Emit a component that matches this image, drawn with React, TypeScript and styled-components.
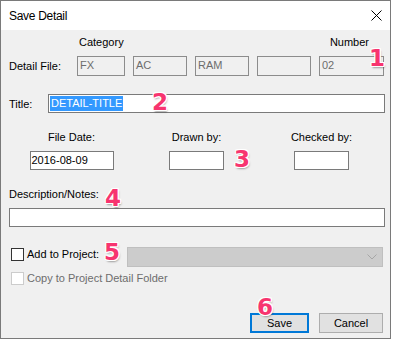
import React from 'react';
import styled, { createGlobalStyle } from 'styled-components';

const GlobalStyle = createGlobalStyle`
  html, body {
    margin: 0;
    padding: 0;
    background: #ffffff;
  }
  body {
    font-family: "Liberation Sans", Arial, sans-serif;
    font-size: 11px;
    color: #000;
  }
`;

const Window = styled.div`
  position: relative;
  box-sizing: border-box;
  width: 391px;
  height: 339px;
  border: 1px solid #7a7a7a;
  background: #f0f0f0;
  display: flex;
  flex-direction: column;
`;

const TitleBar = styled.div`
  height: 29px;
  background: #ffffff;
  display: flex;
  align-items: center;
  justify-content: space-between;
  padding: 0 8px;
`;

const TitleText = styled.div`
  font-size: 12px;
  letter-spacing: -0.3px;
`;

const Body = styled.div`
  display: flex;
  flex-direction: column;
  padding: 0 5px 0 8px;
`;

const Row = styled.div<{ top: number }>`
  display: flex;
  align-items: center;
  margin-top: ${({ top }) => top}px;
`;

const Label = styled.div<{ width?: number }>`
  line-height: 14px;
  white-space: nowrap;
  ${({ width }) => width ? `width: ${width}px; flex-shrink: 0;` : ''}
`;

const HeaderRow = styled.div`
  display: flex;
  line-height: 14px;
  margin-top: 5px;
  padding-left: 70px;
  padding-right: 16px;
  justify-content: space-between;
`;

const Boxes = styled.div`
  display: flex;
  gap: 8px;
`;

const DisabledBox = styled.div<{ w: number }>`
  box-sizing: border-box;
  width: ${({ w }) => w}px;
  height: 20px;
  border: 1px solid #8c8c8c;
  color: #6d6d6d;
  padding: 2px 2px 0;
  line-height: 13px;
`;

const TextBox = styled.div<{ w?: number }>`
  box-sizing: border-box;
  ${({ w }) => w ? `width: ${w}px;` : 'flex: 1 1 auto; min-width: 0;'}
  height: 19px;
  border: 1px solid #7a7a7a;
  background: #ffffff;
  padding: 1px 1px 0;
  line-height: 15px;
`;

const Selection = styled.span`
  background: #3399ff;
  color: #ffffff;
  display: inline-block;
  padding: 0 1px;
`;

const DateGrid = styled.div`
  display: grid;
  grid-template-columns: repeat(3, 125px);
  margin-top: 17px;
`;

const DateCol = styled.div`
  display: flex;
  flex-direction: column;
  align-items: center;
  gap: 7px;
`;

const Stack = styled.div<{ top: number }>`
  display: flex;
  flex-direction: column;
  gap: 7px;
  margin-top: ${({ top }) => top}px;
`;

const CheckRow = styled.div<{ top: number }>`
  display: flex;
  align-items: flex-start;
  margin-top: ${({ top }) => top}px;
`;

const CheckBox = styled.div<{ disabled?: boolean }>`
  box-sizing: border-box;
  width: 13px;
  height: 13px;
  margin: 1px 3px 0 2px;
  border: 1px solid ${({ disabled }) => disabled ? '#cccccc' : '#333333'};
  background: #ffffff;
  flex-shrink: 0;
`;

const CheckLabel = styled.div<{ disabled?: boolean }>`
  line-height: 14px;
  color: ${({ disabled }) => disabled ? '#6d6d6d' : '#000'};
  white-space: nowrap;
`;

const Combo = styled.div`
  box-sizing: border-box;
  height: 20px;
  margin-left: 28px;
  margin-right: 2px;
  flex: 1;
  background: #cccccc;
  border: 1px solid #bfbfbf;
  display: flex;
  align-items: center;
  justify-content: flex-end;
  padding-right: 5px;
`;

const ButtonRow = styled.div`
  display: flex;
  justify-content: flex-end;
  gap: 10px;
  margin-top: 28px;
  margin-right: 2px;
`;

const Button = styled.div<{ primary?: boolean; w: number }>`
  box-sizing: border-box;
  width: ${({ w }) => w}px;
  height: 20px;
  background: #e1e1e1;
  border: ${({ primary }) => primary ? '2px solid #0078d7' : '1px solid #adadad'};
  display: flex;
  align-items: center;
  justify-content: center;
  font-size: 11px;
`;

const Marker = styled.div<{ x: number; y: number }>`
  position: absolute;
  left: ${({ x }) => x}px;
  top: ${({ y }) => y}px;
  font-family: "DejaVu Sans", "Liberation Sans", sans-serif;
  font-weight: bold;
  font-size: 23px;
  line-height: 1;
  color: #f7346f;
  text-shadow:
    -1px -1px 0 #fff, 1px -1px 0 #fff, -1px 1px 0 #fff, 1px 1px 0 #fff,
    0 -1px 0 #fff, 0 1px 0 #fff, -1px 0 0 #fff, 1px 0 0 #fff,
    1px 2px 2px rgba(0, 0, 0, 0.35);
`;

const CloseIcon = () => (
    <svg width="11" height="11" viewBox="0 0 11 11">
        <path d="M0.5 0.5 L10.5 10.5 M10.5 0.5 L0.5 10.5" stroke="#000" strokeWidth="1" fill="none"/>
    </svg>
);

const Chevron = () => (
    <svg width="10" height="6" viewBox="0 0 10 6">
        <path d="M0.5 0.5 L5 5 L9.5 0.5" stroke="#a6a6a6" strokeWidth="1" fill="none"/>
    </svg>
);

const markers = [
    { n: 1, x: 368, y: 46 },
    { n: 2, x: 151, y: 90 },
    { n: 3, x: 233, y: 147 },
    { n: 4, x: 104, y: 186 },
    { n: 5, x: 103, y: 240 },
    { n: 6, x: 256, y: 295 },
];

const App = () => {
    return (
        <>
            <GlobalStyle/>
            <Window>
                <TitleBar>
                    <TitleText>Save Detail</TitleText>
                    <CloseIcon/>
                </TitleBar>
                <Body>
                    <HeaderRow>
                        <span>Category</span>
                        <span>Number</span>
                    </HeaderRow>
                    <Row top={7}>
                        <Label width={68}>Detail File:</Label>
                        <Boxes>
                            <DisabledBox w={48}>FX</DisabledBox>
                            <DisabledBox w={54}>AC</DisabledBox>
                            <DisabledBox w={54}>RAM</DisabledBox>
                            <DisabledBox w={54}/>
                            <DisabledBox w={65}>02</DisabledBox>
                        </Boxes>
                    </Row>
                    <Row top={18}>
                        <Label width={39}>Title:</Label>
                        <TextBox>
                            <Selection>DETAIL-TITLE</Selection>
                        </TextBox>
                    </Row>
                    <DateGrid>
                        <DateCol>
                            <Label>File Date:</Label>
                            <TextBox w={84}>2016-08-09</TextBox>
                        </DateCol>
                        <DateCol>
                            <Label>Drawn by:</Label>
                            <TextBox w={55}/>
                        </DateCol>
                        <DateCol>
                            <Label>Checked by:</Label>
                            <TextBox w={55}/>
                        </DateCol>
                    </DateGrid>
                    <Stack top={17}>
                        <Label>Description/Notes:</Label>
                        <TextBox/>
                    </Stack>
                    <CheckRow top={20}>
                        <CheckBox/>
                        <CheckLabel>Add to Project:</CheckLabel>
                        <Combo>
                            <Chevron/>
                        </Combo>
                    </CheckRow>
                    <CheckRow top={4}>
                        <CheckBox disabled/>
                        <CheckLabel disabled>Copy to Project Detail Folder</CheckLabel>
                    </CheckRow>
                    <ButtonRow>
                        <Button primary w={59}>Save</Button>
                        <Button w={64}>Cancel</Button>
                    </ButtonRow>
                </Body>
                {markers.map(m => (
                    <Marker key={m.n} x={m.x} y={m.y}>{m.n}</Marker>
                ))}
            </Window>
        </>
    );
};

export default App;
